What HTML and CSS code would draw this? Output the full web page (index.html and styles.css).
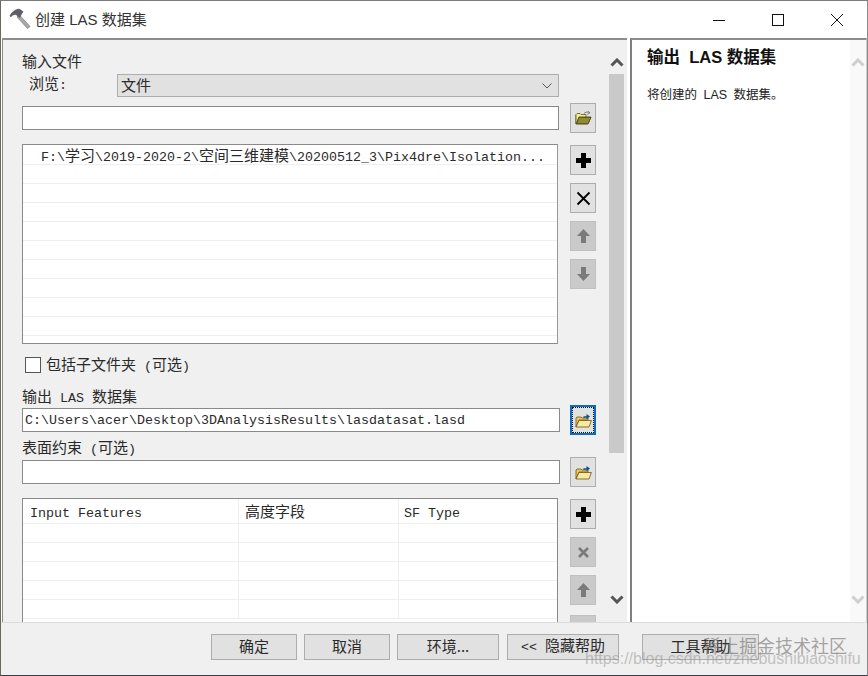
FILE: index.html
```html
<!DOCTYPE html>
<html lang="zh-CN">
<head>
<meta charset="utf-8">
<title>创建 LAS 数据集</title>
<link rel="stylesheet" href="styles.css">
</head>
<body>
<svg class="defs" width="0" height="0" aria-hidden="true">
  <symbol id="folder-a" viewBox="0 0 17 14">
    <path d="M1 4V13H13L16 6H4L1.5 12" fill="#8d8a2f" stroke="#4d4a15" stroke-width=".8"/>
    <path d="M1 13V3.5L2 2.5H5L6 3.5H11V6H4Z" fill="#f6ec8c" stroke="#5a5520" stroke-width=".8"/>
    <path d="M1.5 12.7L4 6.4H16L13 12.7Z" fill="#8f8c33" stroke="#4d4a15" stroke-width=".8"/>
    <path d="M9 2.5C10.5 1 12 .8 13.5 1.5M12.6 0L15 1.8L12.5 3.4" fill="none" stroke="#777" stroke-width="1"/>
  </symbol>
  <symbol id="folder-b" viewBox="0 0 17 15">
    <path d="M1 14V5L2 4H6L7 5H13V7H4Z" fill="#e9c75e" stroke="#6b5414" stroke-width=".8"/>
    <path d="M1 14L4 7.5H16.4L14 14Z" fill="#fbe99c" stroke="#6b5414" stroke-width=".8"/>
    <path d="M8.5 5V3.2H11.5V1L15 3.6L11.5 6.2V4.4H9.6V5Z" fill="#0b4f8e"/>
  </symbol>
  <symbol id="plus" viewBox="0 0 15 15"><path d="M5 0H10V5H15V10H10V15H5V10H0V5H5Z"/></symbol>
  <symbol id="cross" viewBox="0 0 15 15"><path d="M1.5 1.5L13.5 13.5M13.5 1.5L1.5 13.5" fill="none" stroke="currentColor" stroke-width="1.8"/></symbol>
  <symbol id="cross-bold" viewBox="0 0 11 11"><path d="M1 1L10 10M10 1L1 10" fill="none" stroke="currentColor" stroke-width="2.6"/></symbol>
  <symbol id="up" viewBox="0 0 13 14"><path d="M6.5 0L13 7H9V14H4V7H0Z"/></symbol>
  <symbol id="down" viewBox="0 0 13 14"><path d="M4 0H9V7H13L6.5 14L0 7H4Z"/></symbol>
  <symbol id="chev-up" viewBox="0 0 14 9"><path d="M1.5 7.5L7 2L12.5 7.5" fill="none" stroke="currentColor" stroke-width="3"/></symbol>
  <symbol id="chev-down" viewBox="0 0 14 9"><path d="M1.5 1.5L7 7L12.5 1.5" fill="none" stroke="currentColor" stroke-width="3"/></symbol>
</svg>

<div class="window">
  <header class="titlebar">
    <svg class="hammer" viewBox="0 0 22 22" width="22" height="22">
      <path d="M8 9L18.5 20.5L21 18.5L10.5 7Z" fill="#a9a9a9" stroke="#7c7c7c" stroke-width=".7"/>
      <path d="M1 7.5C3 4 6 1.5 10 1L14 3.6L10.5 9.5L7 6.6C5 6.4 3 7 1.8 9Z" fill="#5c5f63" stroke="#3e4044" stroke-width=".5"/>
    </svg>
    <span class="title-text">创建 LAS 数据集</span>
    <div class="controls">
      <span class="ctl"><svg width="12" height="12" viewBox="0 0 12 12"><path d="M0 6.5H12" stroke="#111" fill="none"/></svg></span>
      <span class="ctl"><svg width="12" height="12" viewBox="0 0 12 12"><rect x=".5" y=".5" width="11" height="11" fill="none" stroke="#111"/></svg></span>
      <span class="ctl"><svg width="12" height="12" viewBox="0 0 12 12"><path d="M0 0L12 12M12 0L0 12" fill="none" stroke="#111"/></svg></span>
    </div>
  </header>

  <div class="panes">
    <section class="pane-left">
      <div class="form">
        <div class="label first">输入文件</div>
        <div class="browse">
          <span class="browse-label">浏览<span class="m">:</span></span>
          <div class="select">
            <span class="select-text">文件</span>
            <svg width="10" height="6" viewBox="0 0 10 6"><path d="M.5 .5L5 5L9.5 .5" fill="none" stroke="#555"/></svg>
          </div>
        </div>
        <div class="row r-file">
          <div class="input w537"></div>
          <button class="btn"><svg width="17" height="14"><use href="#folder-a"/></svg></button>
        </div>
        <div class="row r-list">
          <div class="list">
            <div class="list-row"><span class="m">F:\</span>学习<span class="m">\2019-2020-2\</span>空间三维建模<span class="m">\20200512_3\Pix4dre\Isolation...</span></div>
            <div class="list-row"></div><div class="list-row"></div><div class="list-row"></div><div class="list-row"></div>
            <div class="list-row"></div><div class="list-row"></div><div class="list-row"></div><div class="list-row"></div><div class="list-row"></div>
          </div>
          <div class="side">
            <button class="btn"><svg width="15" height="15"><use href="#plus"/></svg></button>
            <button class="btn"><svg width="15" height="15"><use href="#cross"/></svg></button>
            <button class="btn off"><svg width="13" height="14"><use href="#up"/></svg></button>
            <button class="btn off"><svg width="13" height="14"><use href="#down"/></svg></button>
          </div>
        </div>
        <label class="check"><span class="box"></span><span>包括子文件夹<span class="m"> (</span>可选<span class="m">)</span></span></label>
        <div class="label l-out">输出<span class="m"> LAS </span>数据集</div>
        <div class="row r-out">
          <div class="input w538"><span class="m">C:\Users\acer\Desktop\3DAnalysisResults\lasdatasat.lasd</span></div>
          <button class="btn focus"><svg width="17" height="15"><use href="#folder-b"/></svg></button>
        </div>
        <div class="label l-surface">表面约束<span class="m"> (</span>可选<span class="m">)</span></div>
        <div class="row r-surface">
          <div class="input w538"></div>
          <button class="btn"><svg width="17" height="15"><use href="#folder-b"/></svg></button>
        </div>
        <div class="row r-table">
          <div class="table">
            <div class="t-row t-head"><span class="m">Input Features</span><span class="t-zh">高度字段</span><span class="m">SF Type</span></div>
            <div class="t-row"><span></span><span></span><span></span></div>
            <div class="t-row"><span></span><span></span><span></span></div>
            <div class="t-row"><span></span><span></span><span></span></div>
            <div class="t-row"><span></span><span></span><span></span></div>
            <div class="t-row"><span></span><span></span><span></span></div>
          </div>
          <div class="side">
            <button class="btn"><svg width="15" height="15"><use href="#plus"/></svg></button>
            <button class="btn off"><svg width="11" height="11"><use href="#cross-bold"/></svg></button>
            <button class="btn off"><svg width="13" height="14"><use href="#up"/></svg></button>
            <button class="btn off last"></button>
          </div>
        </div>
      </div>
      <div class="scroll">
        <svg class="chev" width="14" height="9"><use href="#chev-up"/></svg>
        <div class="thumb"></div>
        <svg class="chev chev-end" width="14" height="9"><use href="#chev-down"/></svg>
      </div>
    </section>

    <aside class="pane-right">
      <div class="help">
        <h2 class="help-title">输出&nbsp; LAS 数据集</h2>
        <p class="help-text">将创建的 LAS 数据集。</p>
      </div>
      <div class="scroll-light">
        <svg width="14" height="9"><use href="#chev-up"/></svg>
        <svg width="14" height="9"><use href="#chev-down"/></svg>
      </div>
    </aside>
  </div>

  <footer class="footer">
    <button class="fbtn w86">确定</button>
    <button class="fbtn w86">取消</button>
    <button class="fbtn w102">环境...</button>
    <button class="fbtn w112 gap8"><span class="m">&lt;&lt; </span>隐藏帮助</button>
    <button class="fbtn w117 gap23">工具帮助</button>
    <div class="mark-zh">稀土掘金技术社区</div>
    <div class="mark-url">https://blog.csdn.net/zhebushibiaoshifu</div>
  </footer>
</div>
</body>
</html>
```
FILE: styles.css
```css
* { box-sizing: border-box; }
html, body { margin: 0; padding: 0; }
body {
  width: 868px;
  height: 676px;
  overflow: hidden;
  font-family: "Noto Sans CJK SC", sans-serif;
  font-size: 15px;
  line-height: 16px;
  color: #2a2a2a;
}
.defs { position: absolute; }
.m { font-family: "Liberation Mono", monospace; font-size: 13.33px; }

.window {
  width: 868px;
  height: 676px;
  display: flex;
  flex-direction: column;
  background: #fff;
  border-top: 1px solid #7b7b7b;
  border-left: 1px solid #6a6a5a;
  border-right: 1px solid #8a8a8a;
  border-bottom: 1px solid #3c3c44;
}

.titlebar {
  height: 37px;
  flex: none;
  display: flex;
  align-items: center;
  padding-left: 8px;
}
.hammer { margin-top: -2px; }
.title-text {
  margin-left: 4px;
  font-family: "Liberation Sans", "Noto Sans CJK SC", sans-serif;
  font-size: 15px;
  color: #333;
}
.controls { margin-left: auto; margin-right: 1px; display: flex; }
.ctl { width: 58.67px; height: 37px; display: flex; align-items: center; justify-content: center; }

.panes { flex: 1; min-height: 0; display: flex; }

.pane-left {
  width: 625px;
  margin-left: 1px;
  display: flex;
  overflow: hidden;
  background: #f0f0f0;
  border-left: 1px solid #8a8a8a;
  border-top: 2px solid #8c8c8c;
}
.form { width: 606px; flex: none; padding: 13px 0 0 19px; }
.label { height: 16px; white-space: nowrap; }
.browse { margin-top: 5px; height: 23px; display: flex; align-items: center; }
.browse-label { width: 95px; padding: 0 0 2px 7px; }
.select {
  width: 442px;
  height: 23px;
  display: flex;
  align-items: center;
  justify-content: space-between;
  padding: 0 6px 0 3px;
  background: #e1e1e1;
  border: 1px solid #adadad;
}
.select-text { margin-top: -2px; }

.row { display: flex; }
.r-file { margin-top: 6px; align-items: center; gap: 11px; }
.r-list { margin-top: 11px; align-items: flex-start; gap: 12px; }
.r-out { margin-top: 1px; align-items: center; gap: 10px; }
.r-surface { margin-top: 2px; align-items: center; gap: 10px; }
.r-table { margin-top: 11px; align-items: flex-start; gap: 12px; }

.input {
  height: 24px;
  padding: 0 2px;
  line-height: 18px;
  background: #fff;
  border: 1px solid #8a8a8a;
  white-space: nowrap;
  overflow: hidden;
}
.w537 { width: 537px; }
.w538 { width: 538px; }

.btn {
  width: 26px;
  height: 30px;
  flex: none;
  padding: 0;
  display: flex;
  align-items: center;
  justify-content: center;
  color: #000;
  background: #e1e1e1;
  border: 1px solid #adadad;
}
.btn.off { color: #7a7a7a; fill: #7a7a7a; background: #cacaca; border-color: #c0c0c0; }
.btn.focus { background: #e1e1e1; border: 2px solid #0a6cc4; outline: 1px dotted #111; outline-offset: -3px; }
.btn.last { margin-top: 2px; }

.side { display: flex; flex-direction: column; gap: 8px; margin-top: 1px; }

.list {
  width: 536px;
  height: 200px;
  padding-top: 1px;
  background: #fff;
  border: 1px solid #8a8a8a;
  border-right-color: #999;
}
.list-row {
  height: 19px;
  padding-left: 18px;
  line-height: 17px;
  white-space: nowrap;
  border-bottom: 1px solid #efefef;
}

.check { margin: 13px 0 0 3px; height: 16px; display: flex; align-items: center; gap: 5px; }
.box { width: 16px; height: 16px; background: #fff; border: 1px solid #555; }
.l-out { margin-top: 15px; }
.l-surface { margin-top: 4px; }

.table {
  width: 536px;
  height: 160px;
  background: #fff;
  border: 1px solid #8a8a8a;
  border-bottom: 0;
}
.t-row {
  height: 19px;
  display: grid;
  grid-template-columns: 216px 160px 1fr;
  border-bottom: 1px solid #efefef;
}
.t-row > span { padding-left: 7px; line-height: 29px; border-right: 1px solid #efefef; white-space: nowrap; }
.t-row > span:last-child { padding-left: 5px; border-right: 0; }
.t-row > .t-zh { padding-left: 6px; line-height: 23px; }
.t-head { height: 25px; }

.scroll { width: 15px; flex: none; display: flex; flex-direction: column; align-items: center; color: #555; }
.chev { flex: none; margin-top: 18px; }
.thumb { width: 15px; height: 379px; flex: none; margin-top: 7px; background: #c9c9c9; }
.chev-end { margin-top: 142px; }

.pane-right {
  width: 237px;
  margin-left: 3px;
  display: flex;
  background: #fff;
  border-left: 2px solid #7f7f7f;
  border-top: 2px solid #8c8c8c;
  border-right: 1px solid #cfcfcf;
}
.help { flex: 1; padding: 7px 0 0 15px; }
.help-title {
  margin: 0;
  font-family: "Liberation Sans", "Noto Sans CJK SC", sans-serif;
  font-size: 16.5px;
  line-height: 20px;
  font-weight: 700;
  color: #111;
  white-space: nowrap;
}
.help-text {
  margin: 21px 0 0 0;
  font-family: "Liberation Sans", "Noto Sans CJK SC", sans-serif;
  font-size: 12.5px;
  line-height: 14px;
  word-spacing: 3px;
  color: #222;
}
.scroll-light {
  width: 16px;
  flex: none;
  padding: 18px 0 18px;
  display: flex;
  flex-direction: column;
  justify-content: space-between;
  align-items: center;
  color: #cfcfcf;
  background: #f9f9f9;
}

.footer {
  position: relative;
  height: 53px;
  flex: none;
  display: flex;
  align-items: flex-start;
  gap: 7px;
  padding: 11px 0 0 210px;
  background: #f0f0f0;
  border-top: 1px solid #dcdcdc;
}
.fbtn {
  height: 26px;
  padding: 0 0 2px;
  font-family: "Noto Sans CJK SC", sans-serif;
  font-size: 15px;
  line-height: 16px;
  color: #2a2a2a;
  background: #e1e1e1;
  border: 1px solid #adadad;
  white-space: nowrap;
}
.w86 { width: 86px; }
.w102 { width: 102px; }
.w112 { width: 112px; }
.w117 { width: 117px; }
.gap8 { margin-left: 1px; }
.gap23 { margin-left: 16px; }

.mark-zh {
  position: absolute;
  left: 702px;
  top: 10px;
  font-size: 18px;
  line-height: 24px;
  color: rgba(110, 110, 110, .6);
  white-space: nowrap;
}
.mark-url {
  position: absolute;
  left: 584px;
  top: 26px;
  font-family: "Liberation Sans", sans-serif;
  font-size: 16px;
  line-height: 20px;
  color: rgba(150, 150, 150, .55);
  white-space: nowrap;
}
```
